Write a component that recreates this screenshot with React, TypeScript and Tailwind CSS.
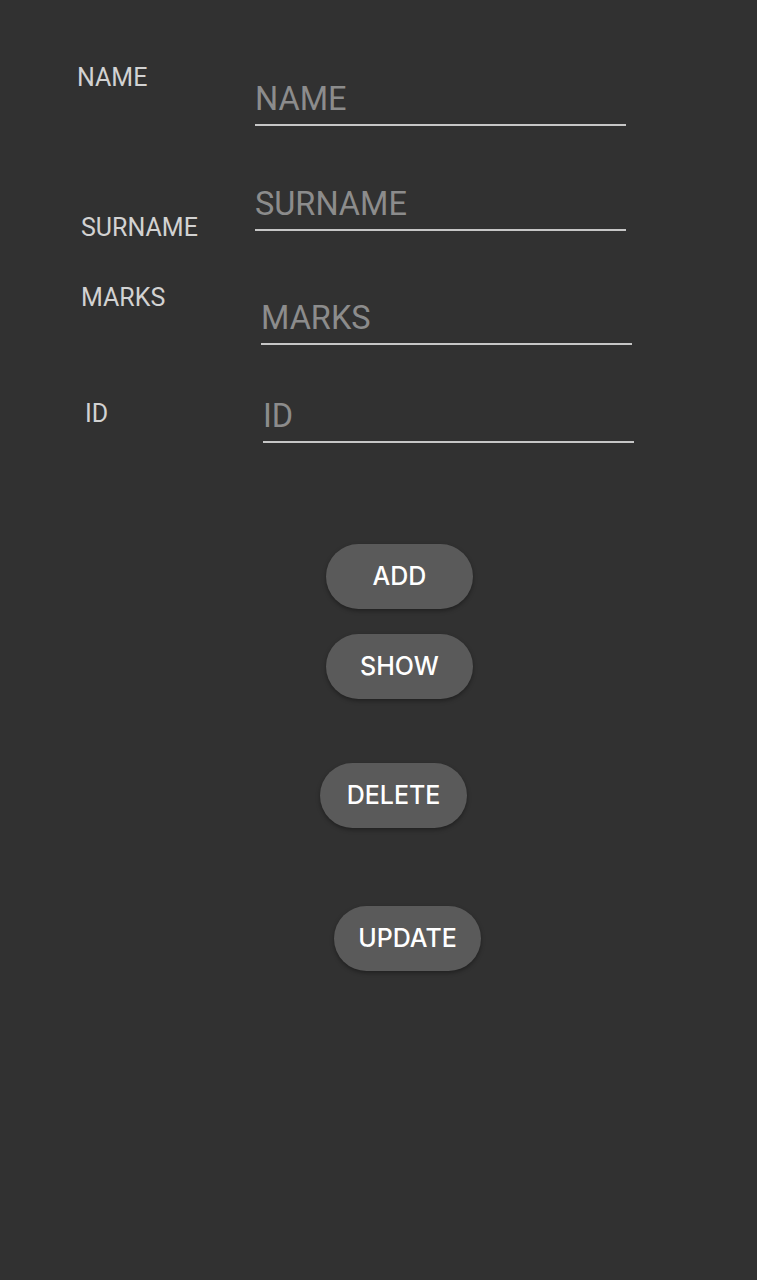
import React from 'react'

interface FieldRowProps {
  label: string
  rowClass: string
  labelClass: string
  fieldClass: string
}

const FieldRow = ({ label, rowClass, labelClass, fieldClass }: FieldRowProps) => {
  return (
    <div className={`flex items-start ${rowClass}`}>
      <div className={`shrink-0 text-[25px] leading-[30px] text-[#d2d2d2] ${labelClass}`}>{label}</div>
      <div className={`w-[371px] shrink-0 border-b-2 border-[#c6c6c6] pb-[6px] ${fieldClass}`}>
        <input
          type="text"
          placeholder={label}
          className="block h-[38px] w-full bg-transparent p-0 text-[32.5px] leading-[38px] text-[#e0e0e0] outline-none placeholder:text-[#8c8c8c]"
        />
      </div>
    </div>
  )
}

const Button = ({ text, className }: { text: string; className: string }) => (
  <button
    className={`flex h-[65px] w-[147px] items-center justify-center rounded-full bg-[#5a5a5a] text-[25px] font-medium text-white shadow-[0_2px_4px_rgba(0,0,0,0.35)] ${className}`}
    style={{ fontFamily: 'Inter, "Noto Sans", sans-serif' }}
  >
    {text}
  </button>
)

export default function App() {
  return (
    <div
      className="min-h-[1280px] w-full bg-[#313131] pt-[63px]"
      style={{ fontFamily: 'Roboto, "Liberation Sans", sans-serif' }}
    >
      <FieldRow label="NAME" rowClass="" labelClass="w-[255px] pl-[77px]" fieldClass="mt-[17px]" />
      <FieldRow label="SURNAME" rowClass="mt-[59px]" labelClass="w-[255px] pl-[81px] mt-[28px]" fieldClass="" />
      <FieldRow label="MARKS" rowClass="mt-[40px]" labelClass="w-[261px] pl-[81px]" fieldClass="mt-[16px]" />
      <FieldRow label="ID" rowClass="mt-[52px]" labelClass="w-[263px] pl-[85px] mt-[2px]" fieldClass="" />

      <div className="flex flex-col items-start">
        <Button text="ADD" className="ml-[326px] mt-[101px]" />
        <Button text="SHOW" className="ml-[326px] mt-[25px]" />
        <Button text="DELETE" className="ml-[320px] mt-[64px]" />
        <Button text="UPDATE" className="ml-[334px] mt-[78px]" />
      </div>
    </div>
  )
}
